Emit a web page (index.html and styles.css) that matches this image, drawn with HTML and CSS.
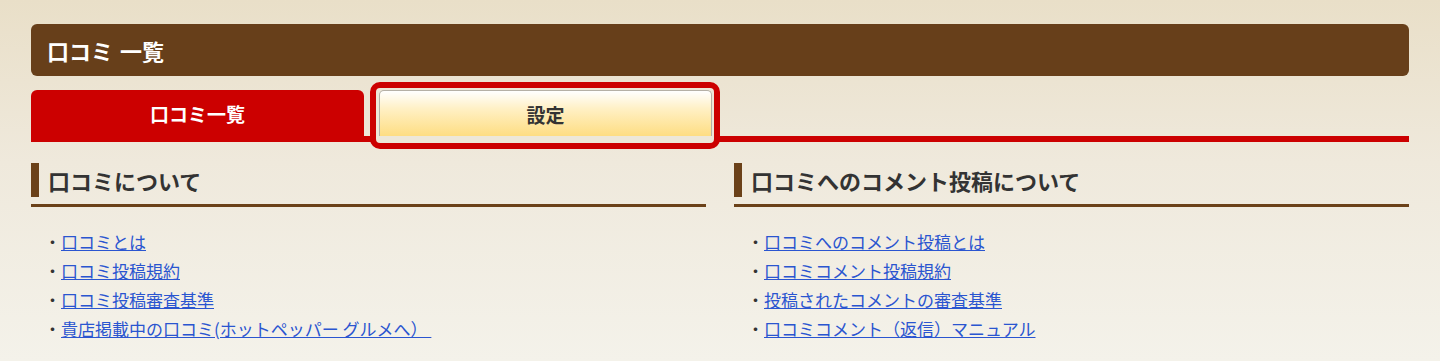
FILE: index.html
```html
<!DOCTYPE html>
<html lang="ja">
<head>
    <meta charset="UTF-8">
    <title>口コミ 一覧</title>
    <link rel="stylesheet" href="styles.css">
</head>
<body>
    <div class="page">
        <h1 class="page-title">口コミ 一覧</h1>

        <div class="tabs">
            <a class="tab tab-active" href="#">口コミ一覧</a>
            <div class="tab-wrap">
                <a class="tab tab-setting" href="#">設定</a>
                <span class="highlight"></span>
            </div>
        </div>

        <div class="columns">
            <section class="info">
                <div class="info-head">
                    <h2>口コミについて</h2>
                </div>
                <ul class="links">
                    <li><a href="#">口コミとは</a></li>
                    <li><a href="#">口コミ投稿規約</a></li>
                    <li><a href="#">口コミ投稿審査基準</a></li>
                    <li><a href="#">貴店掲載中の口コミ(ホットペッパー グルメへ）&nbsp;</a></li>
                </ul>
            </section>
            <section class="info">
                <div class="info-head">
                    <h2>口コミへのコメント投稿について</h2>
                </div>
                <ul class="links">
                    <li><a href="#">口コミへのコメント投稿とは</a></li>
                    <li><a href="#">口コミコメント投稿規約</a></li>
                    <li><a href="#">投稿されたコメントの審査基準</a></li>
                    <li><a href="#">口コミコメント（返信）マニュアル</a></li>
                </ul>
            </section>
        </div>
    </div>
</body>
</html>
```

FILE: styles.css
```css
html, body {
    height: 100%;
}
body {
    margin: 0;
    font-family: "Noto Sans CJK JP", "Noto Sans", sans-serif;
    color: #333;
    background: linear-gradient(to bottom, #e9dfc8 0%, #efe9dc 45%, #f4f2ea 100%);
}

.page {
    padding: 24px 31px 0;
}

.page-title {
    margin: 0;
    height: 52px;
    line-height: 52px;
    padding-left: 16px;
    background-color: #673f1a;
    border-radius: 6px;
    color: #fff;
    font-size: 22px;
    font-weight: bold;
    word-spacing: 2px;
}

.tabs {
    display: flex;
    margin-top: 14px;
    border-bottom: 6px solid #cc0000;
    height: 46px;
}
.tab {
    display: block;
    text-align: center;
    text-decoration: none;
    font-size: 19px;
    font-weight: bold;
}
.tab-active {
    width: 333px;
    height: 46px;
    line-height: 48px;
    background-color: #cc0000;
    color: #fff;
    border-radius: 6px 6px 0 0;
}
.tab-wrap {
    position: relative;
    margin-left: 15px;
}
.tab-setting {
    position: relative;
    z-index: 2;
    width: 331px;
    height: 45px;
    line-height: 47px;
    color: #333;
    border: 1px solid #b5b0a6;
    border-bottom: none;
    border-radius: 5px 5px 0 0;
    background: linear-gradient(to bottom, #ffffff 0%, #fff0c4 40%, #fedd82 100%);
}
.highlight {
    position: absolute;
    z-index: 1;
    left: -9px;
    top: -8px;
    width: 338px;
    height: 55px;
    border: 6px solid #cc0000;
    border-radius: 10px;
    background-color: #ede7d8;
}

.columns {
    display: grid;
    grid-template-columns: 1fr 1fr;
    gap: 28px;
    margin-top: 21px;
}

.info-head {
    border-bottom: 3px solid #6b4119;
    padding-bottom: 7px;
}
.info-head h2 {
    margin: 0;
    height: 34px;
    line-height: 34px;
    border-left: 8px solid #6b4119;
    padding-left: 9px;
    font-size: 22px;
    font-weight: bold;
    color: #333;
}

.links {
    list-style: none;
    margin: 20px 0 0;
    padding: 0 0 0 13px;
    font-size: 17px;
    line-height: 29px;
}
.links li::before {
    content: "・";
    color: #333;
}
.links a {
    color: #2a55d0;
    text-decoration: underline;
}
```
